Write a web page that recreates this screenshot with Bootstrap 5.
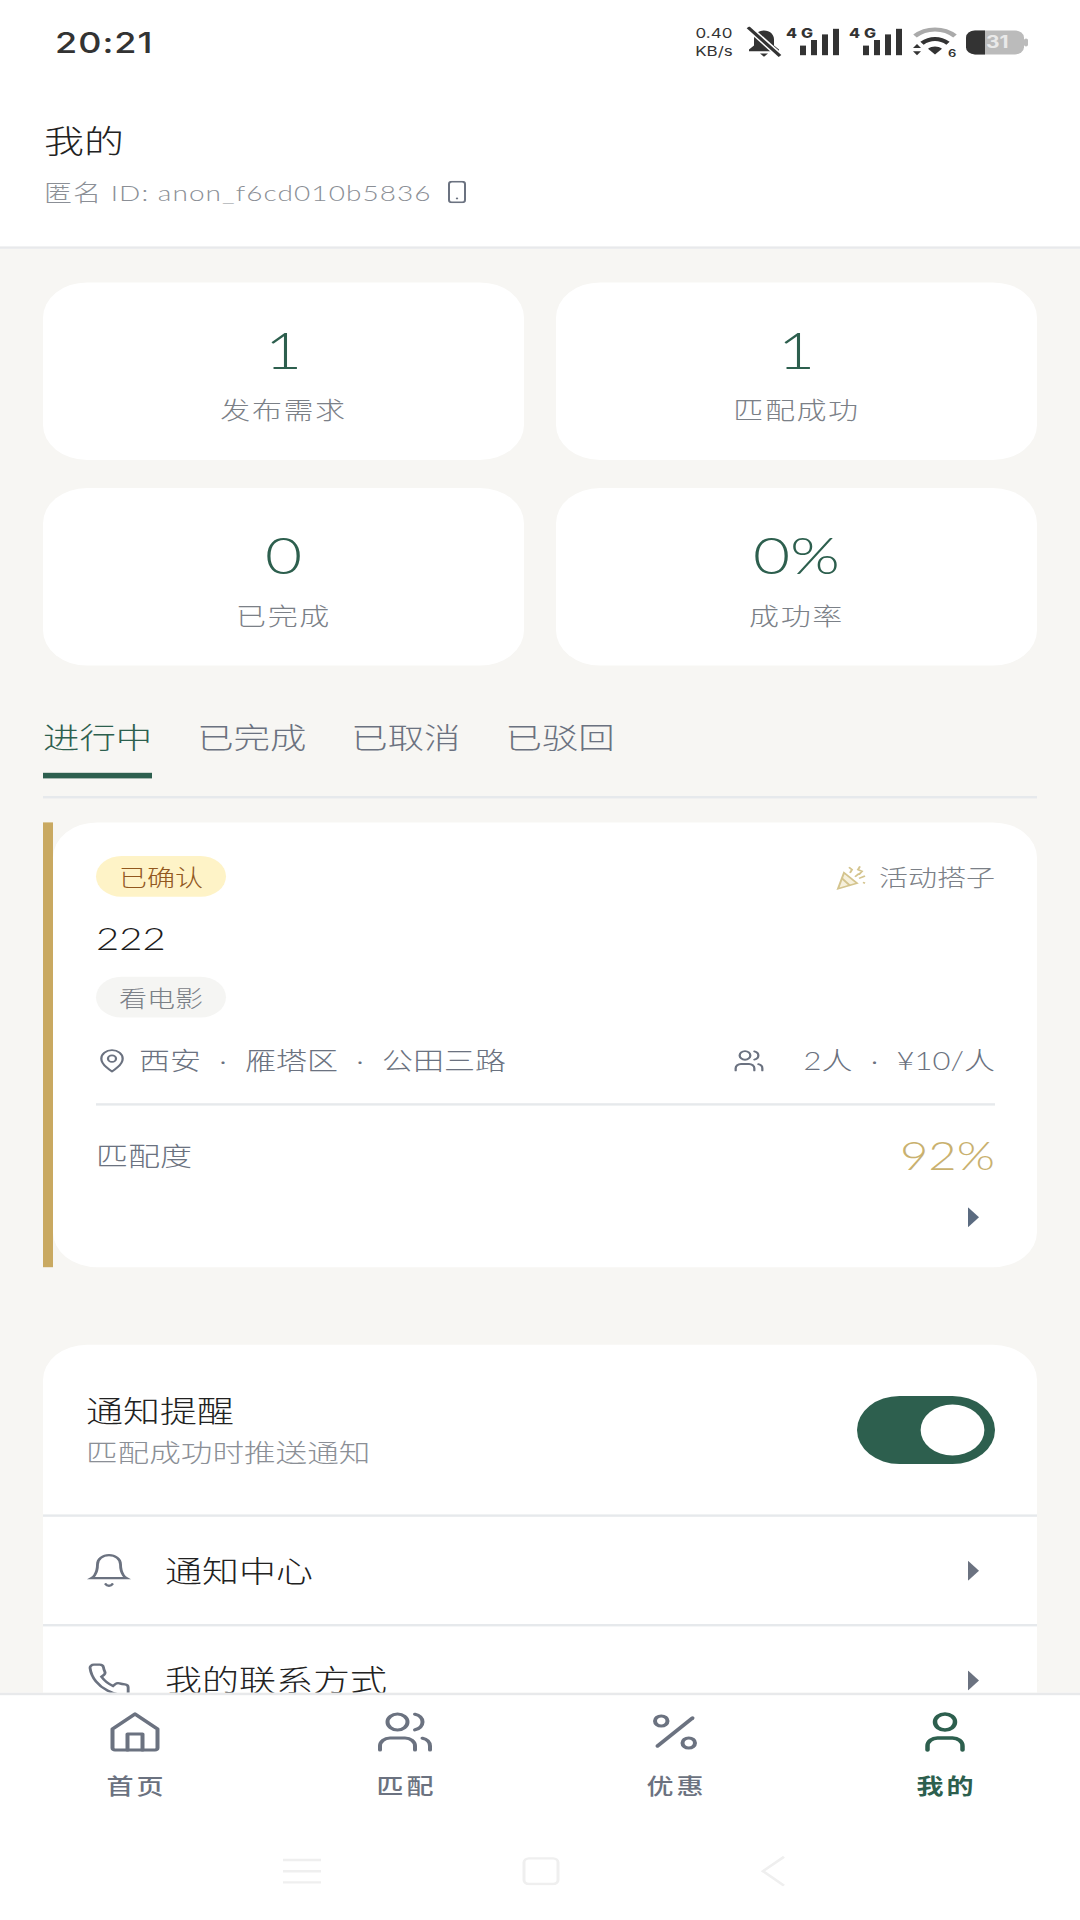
<!doctype html>
<html lang="zh-CN">
<head>
<meta charset="utf-8">
<title>我的</title>
<link href="https://cdn.jsdelivr.net/npm/bootstrap@5.3.0/dist/css/bootstrap.min.css" rel="stylesheet">
<style>
html,body{margin:0;background:#fff;overflow:hidden}
body{font-family:"Lato","Noto Sans CJK SC",sans-serif;font-weight:300}
.stage{height:1920px;width:1080px;overflow:hidden}
.screen{width:1080px;height:2400px;transform:scaleY(.8);transform-origin:0 0;background:#f7f6f3}
.statusbar{height:100px;padding:6px 52px 0 55px;background:#fff}
.clock{font:500 36px/1 "Inter",sans-serif;color:#333;letter-spacing:1px}
.netspeed{font:400 17px/22px "Inter",sans-serif;color:#333;text-align:center;width:42px;margin-right:11px}
.page-head{background:#fff;padding:48px 44px 50px;border-bottom:3px solid #e8e9eb;height:211px}
.page-title{font-size:40px;line-height:56px;color:#222}
.anon{font-size:28px;line-height:36px;margin-top:18px;color:#8b8f96;letter-spacing:1.05px}
.scroll-area{height:1805px;overflow:hidden;padding:42px 43px 0}
.stat-grid{display:grid;grid-template-columns:481px 481px;column-gap:32px;row-gap:35px}
.stat-box{height:222px;background:#fff;border-radius:44px;text-align:center;padding-top:46px}
.stat-num{font-size:64px;line-height:76px;color:#2d5f4e}
.stat-label{font-size:30px;line-height:40px;margin-top:17px;color:#7b8087;letter-spacing:1.6px}
.tabline{margin-top:65px;padding-bottom:22px;border-bottom:3px solid #e6e9ec;gap:45px}
.tab-item{font-size:36.4px;line-height:50px;color:#6b7280;padding-bottom:19px;border-bottom:7px solid transparent}
.tab-item.on{color:#2d5f4e;border-bottom-color:#2d5f4e}
.order-wrap{margin-top:30px;border-left:10px solid #c9a961;height:556px}
.order-body{background:#fff;border-radius:44px;height:100%;padding:42px 42px 0 43px}
.chip{display:inline-block;height:51px;width:130px;line-height:54px;border-radius:26px;font-size:28px;text-align:center}
.chip-gold{background:#fef3c7;color:#92581e}
.chip-gray{background:#f5f5f3;color:#7b8087;margin-top:23px}
.kind{font-size:29px;color:#7b8087;line-height:53px;gap:11px}
.order-name{font-size:40px;line-height:50px;margin-top:25px;color:#1c1c1c}
.meta{margin-top:32px;font-size:31px;line-height:44px;color:#6b7280}
.sep{display:inline-block;width:44px;text-align:center}
.ic-gray{color:#6b7280}
.pin-gap{margin-right:11px}
.people-gap{margin-right:38px}
.match{margin-top:31px;border-top:3px solid #e6e9ec;padding-top:34px;height:97px}
.match-label{font-size:32px;line-height:60px;color:#6b7280}
.match-num{font-size:49px;line-height:60px;color:#c9b16f;margin-bottom:5px}
.chev-line{margin-top:33px;padding-right:16px;line-height:0}
.panel{margin-top:97px;background:#fff;border-radius:44px 44px 0 0}
.row-switch{height:215px;border-bottom:3px solid #e6e9ec;padding:0 42px 0 43px}
.sw-title{font-size:37px;line-height:50px;color:#222}
.sw-sub{font-size:31.6px;line-height:50px;color:#8b8f96;margin-top:2px}
.sw-text{padding-top:6px}
.form-switch .bigswitch{width:138px;height:85px;margin:0;float:none;border:0;background-color:#2d5f4e;opacity:1;border-radius:43px}
.form-switch{padding:0;min-height:0;margin:0}
.menu-row{height:137px;border-bottom:3px solid #e6e9ec;padding:0 58px 0 43px;gap:33px;font-size:37px;color:#222}
.tabbar{height:284px;background:#fff;border-top:3px solid #e8e9eb}
.nav-cell{width:270px;text-align:center;padding-top:16px;color:#6b7280}
.nav-cell.on{color:#2d5f4e}
.nav-cell svg{display:block;margin:0 auto}
.nav-text{font-size:27px;line-height:40px;margin-top:17px;letter-spacing:3px;margin-right:-3px;font-weight:500;font-family:"Noto Sans CJK SC",sans-serif}
.nav-cell.on .nav-text{font-weight:700}
.sysbar{margin-top:67px;height:40px;color:#efefef;padding-right:12px;gap:201px}
</style>
</head>
<body>
<div class="stage">
<div class="screen d-flex flex-column">

  <div class="statusbar d-flex align-items-center justify-content-between flex-shrink-0">
    <span class="clock">20:21</span>
    <div class="d-flex align-items-center">
      <div class="netspeed">0.40<br>KB/s</div>
      <svg width="36" height="40" viewBox="0 0 36 40"><path d="M18 5c-6 0-10 5-10 11v8l-5 5v2h30v-2l-5-5v-8c0-6-4-11-10-11z" fill="#333"/><path d="M14 34h8l-4 4z" fill="#333"/><path d="M2 1l32 36" stroke="#fff" stroke-width="7"/><path d="M2 1l32 36" stroke="#333" stroke-width="3.5"/></svg>
      <svg class="ms-1" width="55" height="40" viewBox="0 0 55 40"><text x="0" y="15" font-family="Inter,sans-serif" font-size="16" font-weight="800" fill="#333" textLength="27">4G</text><rect x="14" y="24" width="6" height="12" fill="#333"/><rect x="25" y="17" width="6" height="19" fill="#333"/><rect x="36" y="10" width="6" height="26" fill="#333"/><rect x="47" y="3" width="6" height="33" fill="#333"/></svg>
      <svg class="ms-2" width="55" height="40" viewBox="0 0 55 40"><text x="0" y="15" font-family="Inter,sans-serif" font-size="16" font-weight="800" fill="#333" textLength="27">4G</text><rect x="14" y="24" width="6" height="12" fill="#333"/><rect x="25" y="17" width="6" height="19" fill="#333"/><rect x="36" y="10" width="6" height="26" fill="#333"/><rect x="47" y="3" width="6" height="33" fill="#333"/></svg>
      <svg class="ms-2" width="46" height="40" viewBox="0 0 46 40"><path d="M3 12C14 1 32 1 43 12" fill="none" stroke="#aaa" stroke-width="5"/><path d="M10 21c8-7 18-7 26 0" fill="none" stroke="#333" stroke-width="5"/><path d="M16 28c4-4 10-4 14 0l-7 7z" fill="#333"/><path d="M1 27l4-5 4 5zM1 31l4 5 4-5z" fill="#333"/><text x="36" y="38" font-family="Inter,sans-serif" font-size="13" font-weight="600" fill="#333">6</text></svg>
      <svg class="ms-2" width="62" height="34" viewBox="0 0 62 34"><rect x="0" y="2" width="58" height="30" rx="9" fill="#bbb"/><path d="M9 2h10v30H9a9 9 0 0 1-9-9V11a9 9 0 0 1 9-9z" fill="#333"/><rect x="58" y="12" width="4" height="10" rx="2" fill="#bbb"/><text x="20" y="24" font-family="Inter,sans-serif" font-size="21" font-weight="700" fill="#e9e9e9">31</text></svg>
    </div>
  </div>

  <div class="page-head flex-shrink-0">
    <div class="page-title">我的</div>
    <div class="anon d-flex align-items-center">匿名 ID: anon_f6cd010b5836
      <svg class="ms-3" width="18" height="28" viewBox="0 0 18 28"><rect x="1" y="1" width="16" height="26" rx="3" fill="none" stroke="#6b7280" stroke-width="2"/><circle cx="9" cy="22" r="1.2" fill="#6b7280"/></svg>
    </div>
  </div>

  <div class="scroll-area flex-shrink-0">
    <div class="stat-grid">
      <div class="stat-box"><div class="stat-num">1</div><div class="stat-label">发布需求</div></div>
      <div class="stat-box"><div class="stat-num">1</div><div class="stat-label">匹配成功</div></div>
      <div class="stat-box"><div class="stat-num">0</div><div class="stat-label">已完成</div></div>
      <div class="stat-box"><div class="stat-num">0%</div><div class="stat-label">成功率</div></div>
    </div>

    <div class="tabline d-flex">
      <div class="tab-item on">进行中</div>
      <div class="tab-item">已完成</div>
      <div class="tab-item">已取消</div>
      <div class="tab-item">已驳回</div>
    </div>

    <div class="order-wrap">
      <div class="order-body">
        <div class="d-flex justify-content-between">
          <span class="chip chip-gold">已确认</span>
          <span class="kind d-flex align-items-center">
            <svg width="33" height="32" viewBox="0 0 33 32" fill="none" stroke="#d4c48e" stroke-width="2"><path d="M3 30l6-20 13 13z" fill="#f6f0dc"/><path d="M7 17l8 9"/><path d="M14 3l3 3-2 4M25 2l-2 4 4 2-3 4M30 14l-6 3M28 22l2 1M20 15l4-4"/></svg>
            活动搭子
          </span>
        </div>
        <div class="order-name">222</div>
        <span class="chip chip-gray">看电影</span>
        <div class="meta d-flex justify-content-between align-items-center">
          <div class="d-flex align-items-center">
            <svg class="ic-gray pin-gap" width="32" height="32" viewBox="0 0 24 24" fill="none" stroke="currentColor" stroke-width="1.7"><path d="M20 10c0 6-8 12-8 12s-8-6-8-12a8 8 0 0 1 16 0Z"/><circle cx="12" cy="10" r="3"/></svg>
            西安<span class="sep">·</span>雁塔区<span class="sep">·</span>公田三路
          </div>
          <div class="d-flex align-items-center">
            <svg class="ic-gray people-gap" width="34" height="32" viewBox="0 0 24 24" fill="none" stroke="currentColor" stroke-width="1.7" stroke-linecap="round"><path d="M16 21v-2a4 4 0 0 0-4-4H6a4 4 0 0 0-4 4v2"/><circle cx="9" cy="7" r="4"/><path d="M22 21v-2a4 4 0 0 0-3-3.87"/><path d="M16 3.13a4 4 0 0 1 0 7.75"/></svg>
            2人<span class="sep">·</span>¥10/人
          </div>
        </div>
        <div class="match d-flex justify-content-between align-items-center">
          <span class="match-label">匹配度</span>
          <span class="match-num">92%</span>
        </div>
        <div class="chev-line d-flex justify-content-end">
          <svg width="11" height="25" viewBox="0 0 11 25"><path d="M0 0l11 12.5L0 25z" fill="#5b6b80"/></svg>
        </div>
      </div>
    </div>

    <div class="panel">
      <div class="row-switch d-flex justify-content-between align-items-center">
        <div class="sw-text">
          <div class="sw-title">通知提醒</div>
          <div class="sw-sub">匹配成功时推送通知</div>
        </div>
        <div class="form-check form-switch">
          <input class="form-check-input bigswitch" type="checkbox" role="switch" checked aria-label="通知提醒">
        </div>
      </div>
      <div class="menu-row d-flex align-items-center">
        <svg class="ic-gray flex-shrink-0" width="46" height="46" viewBox="0 0 24 24" fill="none" stroke="currentColor" stroke-width="1.5" stroke-linecap="round"><path d="M6 8a6 6 0 0 1 12 0c0 7 3 9 3 9H3s3-2 3-9"/><path d="M10.3 21a1.94 1.94 0 0 0 3.4 0"/></svg>
        <span class="flex-grow-1">通知中心</span>
        <svg width="11" height="25" viewBox="0 0 11 25"><path d="M0 0l11 12.5L0 25z" fill="#6b7280"/></svg>
      </div>
      <div class="menu-row d-flex align-items-center">
        <svg class="ic-gray flex-shrink-0" width="46" height="46" viewBox="0 0 24 24" fill="none" stroke="currentColor" stroke-width="1.5" stroke-linecap="round"><path d="M22 16.92v3a2 2 0 0 1-2.18 2 19.79 19.79 0 0 1-8.63-3.07 19.5 19.5 0 0 1-6-6 19.79 19.79 0 0 1-3.07-8.67A2 2 0 0 1 4.11 2h3a2 2 0 0 1 2 1.72 12.84 12.84 0 0 0 .7 2.81 2 2 0 0 1-.45 2.11L8.09 9.91a16 16 0 0 0 6 6l1.27-1.27a2 2 0 0 1 2.11-.45 12.84 12.84 0 0 0 2.81.7A2 2 0 0 1 22 16.92z"/></svg>
        <span class="flex-grow-1">我的联系方式</span>
        <svg width="11" height="25" viewBox="0 0 11 25"><path d="M0 0l11 12.5L0 25z" fill="#6b7280"/></svg>
      </div>
    </div>
  </div>

  <div class="tabbar flex-shrink-0">
    <div class="d-flex">
      <div class="nav-cell">
        <svg width="60" height="60" viewBox="0 0 24 24" fill="none" stroke="currentColor" stroke-width="1.6" stroke-linecap="round" stroke-linejoin="round"><path d="M3 10.5 12 3l9 7.5V20a1 1 0 0 1-1 1H4a1 1 0 0 1-1-1z"/><path d="M9 21v-8h6v8"/></svg>
        <div class="nav-text">首页</div>
      </div>
      <div class="nav-cell">
        <svg width="60" height="60" viewBox="0 0 24 24" fill="none" stroke="currentColor" stroke-width="1.6" stroke-linecap="round" stroke-linejoin="round"><path d="M16 21v-2a4 4 0 0 0-4-4H6a4 4 0 0 0-4 4v2"/><circle cx="9" cy="7" r="4"/><path d="M22 21v-2a4 4 0 0 0-3-3.87"/><path d="M16 3.13a4 4 0 0 1 0 7.75"/></svg>
        <div class="nav-text">匹配</div>
      </div>
      <div class="nav-cell">
        <svg width="60" height="60" viewBox="0 0 24 24" fill="none" stroke="currentColor" stroke-width="1.6" stroke-linecap="round" stroke-linejoin="round"><path d="M19 5 5 19"/><circle cx="6.5" cy="6.5" r="2.5"/><circle cx="17.5" cy="17.5" r="2.5"/></svg>
        <div class="nav-text">优惠</div>
      </div>
      <div class="nav-cell on">
        <svg width="60" height="60" viewBox="0 0 24 24" fill="none" stroke="currentColor" stroke-width="1.8" stroke-linecap="round" stroke-linejoin="round"><path d="M19 21v-2a4 4 0 0 0-4-4H9a4 4 0 0 0-4 4v2"/><circle cx="12" cy="7" r="4"/></svg>
        <div class="nav-text">我的</div>
      </div>
    </div>
    <div class="sysbar d-flex justify-content-center align-items-center">
      <svg width="38" height="34" viewBox="0 0 38 34" stroke="currentColor" stroke-width="3"><path d="M0 3h38M0 17h38M0 31h38"/></svg>
      <svg width="38" height="36" viewBox="0 0 38 36" fill="none" stroke="currentColor" stroke-width="3"><rect x="2" y="2" width="34" height="32" rx="5"/></svg>
      <svg width="24" height="38" viewBox="0 0 24 38" fill="none" stroke="currentColor" stroke-width="3"><path d="M23 1 2 19l21 18"/></svg>
    </div>
  </div>

</div>
</div>
<script src="https://cdn.jsdelivr.net/npm/bootstrap@5.3.0/dist/js/bootstrap.bundle.min.js"></script>
</body>
</html>
